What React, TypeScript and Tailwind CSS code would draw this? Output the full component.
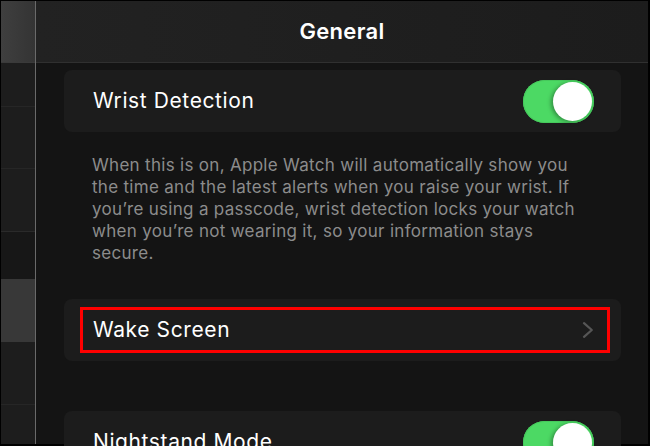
function Toggle() {
  return (
    <div className="flex h-[43px] w-[71px] items-center justify-end rounded-full bg-[#4cd964] p-[2px] shadow-[inset_0_0_0_1px_#46c95c]">
      <div className="h-[39px] w-[39px] rounded-full bg-white shadow-[-2px_1px_4px_rgba(0,0,0,0.35)]" />
    </div>
  );
}

function Chevron() {
  return (
    <svg width="12" height="16" viewBox="0 0 12 16" fill="none">
      <path d="M2 1.2 L9.8 8 L2 14.8" stroke="#565656" strokeWidth="2.2" strokeLinecap="round" strokeLinejoin="round" />
    </svg>
  );
}

const sideRows = [
  "h-[44px] bg-[#1d1d1d] border-b border-[#262626]",
  "h-[62px] bg-[#1d1d1d] border-b border-[#262626]",
  "h-[63px] bg-[#1d1d1d] border-b border-[#2a2a2a]",
  "h-[47px] bg-[#171717]",
  "h-[63px] bg-[#383838]",
  "h-[63px] bg-[#1d1d1d] border-b border-[#262626]",
  "flex-1 bg-[#1d1d1d]",
];

export default function App() {
  return (
    <div
      className="h-[446px] w-[650px] overflow-hidden bg-black pb-[2px] pl-px pr-[2px] pt-px"
      style={{ fontFamily: "Inter, 'Noto Sans', sans-serif" }}
    >
      <div className="flex h-full">
        {/* sidebar */}
        <div className="flex w-[34px] flex-col">
          <div className="h-[62px] border-b border-[#3a3a3a] bg-gradient-to-r from-[#3f3f3f] to-[#343434]" />
          {sideRows.map((c, i) => (
            <div key={i} className={c} />
          ))}
        </div>
        <div className="w-px bg-[#6a6a6a]" />

        {/* main */}
        <div className="flex flex-1 flex-col bg-[#141414]">
          <div className="flex h-[62px] shrink-0 items-center justify-center border-b border-[#303030] bg-gradient-to-r from-[#222222] to-[#1c1c1c]">
            <span className="text-[22px] font-semibold tracking-[0.3px] text-white">General</span>
          </div>

          <div className="flex flex-col pl-[28px] pr-[27px] pt-[7px]">
            <div className="flex h-[62px] items-center justify-between rounded-[8px] bg-[#1c1c1c] pl-[29px] pr-[27px]">
              <span className="text-[21px] tracking-[0.6px] text-white">Wrist Detection</span>
              <Toggle />
            </div>

            <p className="mt-[22px] w-[522px] pl-[28px] text-[17px] leading-[22px] tracking-[0.3px] text-[#8c8c8c]">
              When this is on, Apple Watch will automatically show you the time and the latest alerts when you raise your wrist. If you’re using a passcode, wrist detection locks your watch when you’re not wearing it, so your information stays secure.
            </p>

            <div className="relative mt-[35px] flex h-[62px] items-center justify-between rounded-[8px] bg-[#1c1c1c] pl-[29px] pr-[27px]">
              <span className="text-[21px] tracking-[0.6px] text-white">Wake Screen</span>
              <Chevron />
              <div className="absolute bottom-[8px] left-[16px] right-[11px] top-[8px] border-[3px] border-[#ff0000]" />
            </div>

            <div className="mt-[50px] flex h-[62px] items-center justify-between rounded-[8px] bg-[#1c1c1c] pl-[29px] pr-[27px]">
              <span className="text-[21px] tracking-[0.6px] text-white">Nightstand Mode</span>
              <Toggle />
            </div>
          </div>
        </div>
      </div>
    </div>
  );
}
